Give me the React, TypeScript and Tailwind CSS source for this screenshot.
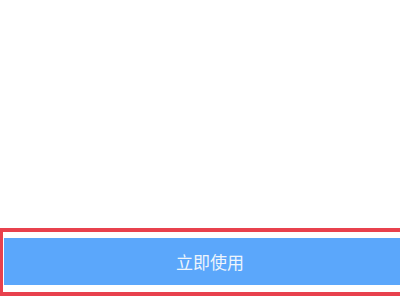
import React from 'react';

const App = () => {
  return (
    <div className="w-[400px] h-[300px] bg-white flex flex-col overflow-hidden">
      <div className="flex-1" />
      <div className="mb-[4px] w-[420px] shrink-0 h-[68px] border-y-4 border-x-[3px] border-[#e8414d] px-px pt-[6px] pb-[7px] flex">
        <button
          className="flex-1 bg-[#5ba7fb] text-[#eef5fc] text-[17px] flex items-center justify-center"
          style={{ fontFamily: '"Noto Sans CJK SC", "Noto Sans", sans-serif' }}
        >
          立即使用
        </button>
      </div>
    </div>
  );
};

export default App;
